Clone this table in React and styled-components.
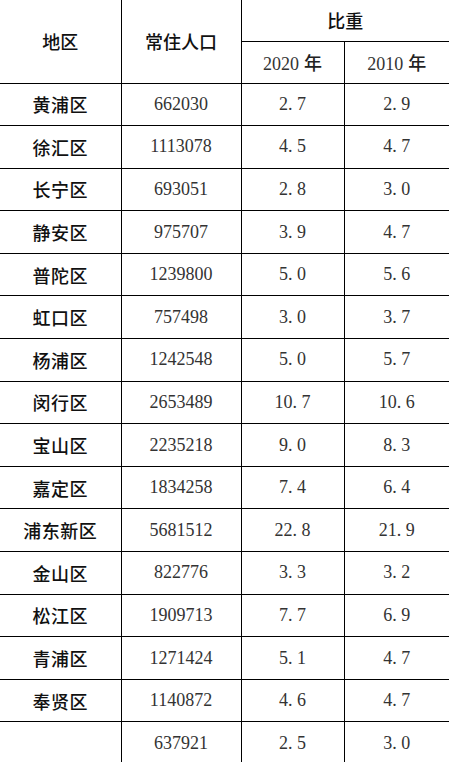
import React from "react";
import styled, { createGlobalStyle } from "styled-components";

const GlobalStyle = createGlobalStyle`
  html, body {
    margin: 0;
    padding: 0;
    background: #ffffff;
  }
`;

const rows = [
  ["黄浦区", "662030", "2.7", "2.9"],
  ["徐汇区", "1113078", "4.5", "4.7"],
  ["长宁区", "693051", "2.8", "3.0"],
  ["静安区", "975707", "3.9", "4.7"],
  ["普陀区", "1239800", "5.0", "5.6"],
  ["虹口区", "757498", "3.0", "3.7"],
  ["杨浦区", "1242548", "5.0", "5.7"],
  ["闵行区", "2653489", "10.7", "10.6"],
  ["宝山区", "2235218", "9.0", "8.3"],
  ["嘉定区", "1834258", "7.4", "6.4"],
  ["浦东新区", "5681512", "22.8", "21.9"],
  ["金山区", "822776", "3.3", "3.2"],
  ["松江区", "1909713", "7.7", "6.9"],
  ["青浦区", "1271424", "5.1", "4.7"],
  ["奉贤区", "1140872", "4.6", "4.7"],
  ["", "637921", "2.5", "3.0"],
];

const Page = styled.div`
  width: 455px;
  height: 762px;
  overflow: hidden;
  background: #ffffff;
`;

const Table = styled.table`
  width: 449px;
  border-collapse: collapse;
  table-layout: fixed;
`;

const Cell = styled.td`
  padding: 0;
  font-weight: normal;
  text-align: center;
  vertical-align: middle;
  border-bottom: 1px solid #000;
  border-right: ${(p) => (p.$last ? "none" : "1px solid #000")};
  height: ${(p) => p.$h || 41.6}px;
  box-sizing: border-box;
`;

const HeadText = styled.span`
  font-family: "Noto Sans CJK SC", "Noto Sans", sans-serif;
  font-weight: 500;
  font-size: 18px;
  color: #111;
`;

const Region = styled(HeadText)`
  letter-spacing: 0.5px;
`;

const YearText = styled.span`
  font-family: "Liberation Serif", "Noto Sans CJK SC", serif;
  font-weight: normal;
  font-size: 18px;
  color: #333;
`;

const Nian = styled.span`
  font-family: "Noto Sans CJK SC", sans-serif;
  font-weight: 500;
  font-size: 18px;
  color: #222;
  margin-left: 5px;
`;

const Num = styled.span`
  font-family: "Liberation Serif", serif;
  font-size: 18px;
  color: #333;
`;

const Dot = styled.span`
  display: inline-block;
  width: 0.5em;
  text-align: left;
`;

function Decimal({ value }) {
  const [a, b] = value.split(".");
  return (
    <Num>
      {a}
      <Dot>.</Dot>
      {b}
    </Num>
  );
}

export default function App() {
  return (
    <Page>
      <GlobalStyle />
      <Table>
        <colgroup>
          <col style={{ width: 121 }} />
          <col style={{ width: 120 }} />
          <col style={{ width: 103 }} />
          <col style={{ width: 105 }} />
        </colgroup>
        <thead>
          <tr>
            <Cell as="th" rowSpan={2} $h={40}>
              <HeadText>地区</HeadText>
            </Cell>
            <Cell as="th" rowSpan={2} $h={40}>
              <HeadText>常住人口</HeadText>
            </Cell>
            <Cell as="th" colSpan={2} $last $h={41}>
              <HeadText>比重</HeadText>
            </Cell>
          </tr>
          <tr>
            <Cell as="th" $h={42}>
              <YearText>2020</YearText>
              <Nian>年</Nian>
            </Cell>
            <Cell as="th" $last $h={42}>
              <YearText>2010</YearText>
              <Nian>年</Nian>
            </Cell>
          </tr>
        </thead>
        <tbody>
          {rows.map((r, i) => (
            <tr key={i}>
              <Cell $h={42.6}>
                <Region>{r[0]}</Region>
              </Cell>
              <Cell $h={42.6}>
                <Num>{r[1]}</Num>
              </Cell>
              <Cell $h={42.6}>
                <Decimal value={r[2]} />
              </Cell>
              <Cell $last $h={42.6}>
                <Decimal value={r[3]} />
              </Cell>
            </tr>
          ))}
        </tbody>
      </Table>
    </Page>
  );
}
